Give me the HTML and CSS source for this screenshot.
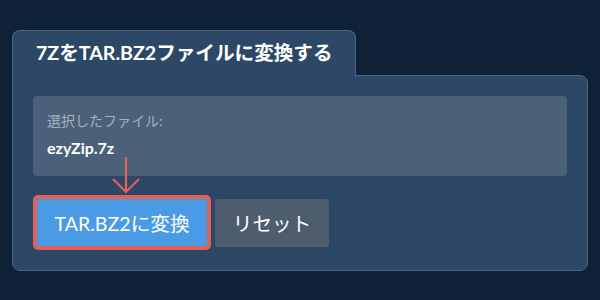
FILE: index.html
```html
<!DOCTYPE html>
<html>
<head>
    <title>7Z to TAR.BZ2</title>
    <link rel="stylesheet" href="styles.css">
</head>
<body>
    <div class="converter">
        <!-- Tab header -->
        <div class="tab">7ZをTAR.BZ2ファイルに変換する</div>

        <!-- Main panel -->
        <div class="panel">
            <div class="file-box">
                <p class="file-label">選択したファイル:</p>
                <p class="file-name">ezyZip.7z</p>
            </div>
            <div class="actions">
                <div class="highlight">
                    <button class="btn btn-convert">TAR.BZ2に変換</button>
                    <svg class="arrow" width="30" height="38" viewBox="0 0 30 38">
                        <path d="M15 0 V35 M2 22 L15 35 L28 22" fill="none" stroke="#e0605a" stroke-width="2.2"/>
                    </svg>
                </div>
                <button class="btn btn-reset">リセット</button>
            </div>
        </div>
    </div>
</body>
</html>
```

FILE: styles.css
```css
body {
    margin: 0;
    background-color: #0f2137;
    font-family: Lato, "Noto Sans CJK JP", sans-serif;
    color: #fff;
}
.converter {
    padding: 30px 12px 0 12px;
    width: 576px;
}
.tab {
    display: inline-block;
    background-color: #2c4866;
    border: 1px solid #4d6583;
    border-bottom: none;
    border-radius: 8px 8px 0 0;
    padding: 13px 22px 14px 23px;
    font-size: 19.6px;
    font-weight: bold;
    line-height: 18px;
    position: relative;
    z-index: 1;
    margin-bottom: -1px;
}
.panel {
    background-color: #2c4866;
    border: 1px solid #4d6583;
    border-radius: 0 8px 8px 8px;
    padding: 20px;
}
.file-box {
    background-color: #4b6079;
    border-radius: 4px;
    padding: 17px 14px 19px 14px;
}
.file-label {
    margin: 0;
    font-size: 14px;
    line-height: 16px;
    color: #a6b2c0;
}
.file-name {
    margin: 10px 0 0 0;
    font-size: 16px;
    font-weight: bold;
    line-height: 18px;
}
.actions {
    display: flex;
    align-items: center;
    gap: 4px;
    margin-top: 19px;
}
.highlight {
    position: relative;
    border: 4px solid #e0605a;
    border-radius: 5px;
    display: flex;
}
.arrow {
    position: absolute;
    left: 74px;
    top: -42px;
}
.btn {
    border: none;
    border-radius: 3px;
    color: #fff;
    font-family: Lato, "Noto Sans CJK JP", sans-serif;
    font-size: 19.6px;
    height: 47px;
    padding: 0 10px;
}
.btn-convert {
    background-color: #4a9ae5;
    border-radius: 1px;
    width: 170px;
}
.btn-reset {
    background-color: #4d5d6e;
    width: 114px;
    height: 48px;
}
```
